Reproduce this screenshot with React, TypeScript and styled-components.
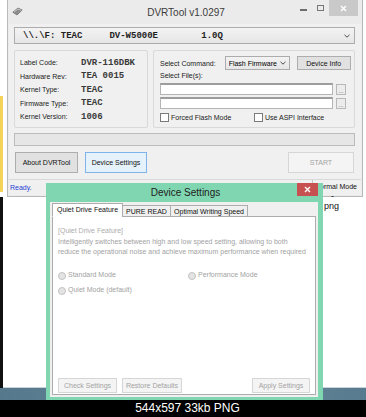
import React from 'react'
import styled, { createGlobalStyle } from 'styled-components'

const GlobalStyle = createGlobalStyle`
  html, body {
    margin: 0;
    padding: 0;
  }
  body {
    width: 366px;
    height: 417px;
    overflow: hidden;
    background: #fff;
    font-family: "Liberation Sans", Arial, sans-serif;
  }
`

function App() {
  return (
    <>
      <GlobalStyle />
      <Screen>
        <Desktop>
          <YellowEdge />
          <BlackEdge />
          <Taskbar />

          <MainWindow>
            <TitleBar>
              <TitleLeft>
                <svg width="11" height="9" viewBox="0 0 11 9">
                  <path d="M0.8 5.2 L6 1 L10.2 3 L5 8 Z" fill="#8c8c8c" stroke="#5c5c5c" strokeWidth="0.6" />
                  <path d="M2 5 L6 2 L9.2 3.4" stroke="#d4d4d4" fill="none" strokeWidth="0.8" />
                </svg>
              </TitleLeft>
              <TitleText>DVRTool v1.0297</TitleText>
              <Controls>
                <MinGlyph />
                <MaxGlyph />
                <CloseBox $active={false}>
                  <CloseIcon />
                </CloseBox>
              </Controls>
            </TitleBar>

            <Body>
              <DriveCombo>
                <span>{'\\\\.\\F: TEAC     DV-W5000E        1.0Q'}</span>
                <Chevron />
              </DriveCombo>

              <GroupRow>
                <GroupBox>
                  <InfoGrid>
                    <Label>Label Code:</Label>
                    <Value>DVR-116DBK</Value>
                    <Label>Hardware Rev:</Label>
                    <Value>TEA 0015</Value>
                    <Label>Kernel Type:</Label>
                    <Value>TEAC</Value>
                    <Label>Firmware Type:</Label>
                    <Value>TEAC</Value>
                    <Label>Kernel Version:</Label>
                    <Value>1006</Value>
                  </InfoGrid>
                </GroupBox>

                <GroupBox>
                  <CommandPane>
                    <CommandRow>
                      <Label>Select Command:</Label>
                      <SmallCombo>
                        <span>Flash Firmware</span>
                        <Chevron />
                      </SmallCombo>
                      <WinButton $w={54} $h={14}>Device Info</WinButton>
                    </CommandRow>
                    <FilesLabel>Select File(s):</FilesLabel>
                    <FileRow $top={1}>
                      <FileInput />
                      <DotsButton>...</DotsButton>
                    </FileRow>
                    <FileRow $top={2}>
                      <FileInput />
                      <DotsButton>...</DotsButton>
                    </FileRow>
                    <CheckRow>
                      <CheckItem $w={94}>
                        <CheckBox />
                        <Label>Forced Flash Mode</Label>
                      </CheckItem>
                      <CheckItem>
                        <CheckBox />
                        <Label>Use ASPI Interface</Label>
                      </CheckItem>
                    </CheckRow>
                  </CommandPane>
                </GroupBox>
              </GroupRow>

              <Progress />

              <ButtonRow>
                <WinButton $w={63}>About DVRTool</WinButton>
                <WinButton $w={62} $state="focused">Device Settings</WinButton>
                <Spacer />
                <WinButton $w={66} $state="disabled">START</WinButton>
              </ButtonRow>
            </Body>

            <StatusBar>
              <StatusText>Ready.</StatusText>
              <StatusPanel>Normal Mode</StatusPanel>
            </StatusBar>
          </MainWindow>

          <PageNote>
            <span>-</span>
            <span>png</span>
          </PageNote>

          <Dialog>
            <DialogTitleBar>
              <span />
              <DialogTitle>Device Settings</DialogTitle>
              <CloseBox $active>
                <CloseIcon />
              </CloseBox>
            </DialogTitleBar>

            <DialogClient>
              <TabStrip>
                <Tab $w={71} $selected>Quiet Drive Feature</Tab>
                <Tab $w={49}>PURE READ</Tab>
                <Tab $w={78}>Optimal Writing Speed</Tab>
              </TabStrip>
              <TabPanel>
                <Heading>[Quiet Drive Feature]</Heading>
                <Description>
                  Intelligently switches between high and low speed setting, allowing to both
                  <br />
                  reduce the operational noise and achieve maximum performance when required
                </Description>
                <RadioGrid>
                  <RadioItem>
                    <RadioDot />
                    <span>Standard Mode</span>
                  </RadioItem>
                  <RadioItem>
                    <RadioDot />
                    <span>Performance Mode</span>
                  </RadioItem>
                  <RadioItem>
                    <RadioDot />
                    <span>Quiet Mode (default)</span>
                  </RadioItem>
                </RadioGrid>
                <DialogButtons>
                  <WinButton $w={59} $h={15} $state="disabled">Check Settings</WinButton>
                  <WinButton $w={60} $h={15} $state="disabled">Restore Defaults</WinButton>
                  <Spacer />
                  <WinButton $w={58} $h={15} $state="disabled">Apply Settings</WinButton>
                </DialogButtons>
              </TabPanel>
            </DialogClient>
          </Dialog>
        </Desktop>

        <Caption>544x597 33kb PNG</Caption>
      </Screen>
    </>
  )
}

export default App

function Chevron() {
  return (
    <ChevronSvg width="6" height="4" viewBox="0 0 6 4">
      <path d="M0.5 0.8 L3 3.2 L5.5 0.8" stroke="#4a4a4a" strokeWidth="1" fill="none" />
    </ChevronSvg>
  )
}

function CloseIcon() {
  return (
    <svg width="7" height="7" viewBox="0 0 7 7">
      <path d="M1 1 L6 6 M6 1 L1 6" stroke="#fff" strokeWidth="1.4" />
    </svg>
  )
}

const Screen = styled.div`
  width: 366px;
  height: 417px;
  display: flex;
  flex-direction: column;
`

const Desktop = styled.div`
  position: relative;
  height: 400px;
  overflow: hidden;
  background: #fff;
  display: flex;
  flex-direction: column;
  justify-content: flex-end;
`

const YellowEdge = styled.div`
  position: absolute;
  left: 0;
  top: 96px;
  width: 3px;
  height: 96px;
  background: #f3d35a;
`

const BlackEdge = styled.div`
  position: absolute;
  left: 0;
  top: 197px;
  width: 3px;
  height: 191px;
  background: #111;
`

const PageNote = styled.div`
  position: absolute;
  left: 324px;
  top: 191px;
  display: flex;
  flex-direction: column;
  font-size: 9px;
  line-height: 10px;
  color: #111;

  span:first-child {
    padding-left: 7px;
  }
`

const Taskbar = styled.div`
  height: 12px;
  border-top: 1px solid #c9d4da;
  background: linear-gradient(90deg, #55788c, #6b8c9d 60%, #577a8e);
`

const Caption = styled.div`
  height: 17px;
  background: #000;
  color: #fff;
  font-size: 12px;
  line-height: 17px;
  text-align: center;
  padding-left: 9px;
`

/* main window */

const MainWindow = styled.div`
  position: absolute;
  left: 7px;
  top: 0;
  width: 356px;
  box-sizing: border-box;
  border: 1px solid #b9b9b9;
  border-top: none;
  padding: 0 1px 1px 1px;
  background: #ebebeb;
`

const TitleBar = styled.div`
  height: 24px;
  display: grid;
  grid-template-columns: 1fr auto 1fr;
  align-items: center;
`

const TitleLeft = styled.div`
  display: flex;
  align-items: center;
  padding-left: 3px;
  padding-bottom: 2px;
`

const TitleText = styled.div`
  font-size: 10px;
  color: #3c3c3c;
  padding-left: 2px;
`

const Controls = styled.div`
  justify-self: end;
  align-self: start;
  display: flex;
  align-items: center;
  height: 16px;
  margin-right: 3px;
`

const MinGlyph = styled.div`
  width: 7px;
  height: 2px;
  margin-top: 3px;
  background: #6d6d6d;
`

const MaxGlyph = styled.div`
  width: 7px;
  height: 6px;
  box-sizing: border-box;
  border: 1px solid #777;
  margin-left: 10px;
  margin-right: 5px;
`

const CloseBox = styled.div<{ $active: boolean }>`
  width: ${({ $active }) => ($active ? 21 : 29)}px;
  height: ${({ $active }) => ($active ? 13 : 16)}px;
  background: ${({ $active }) => ($active ? '#c75050' : '#c9c9c9')};
  display: flex;
  align-items: center;
  justify-content: center;
`

const Body = styled.div`
  background: #f0f0f0;
  padding: 3px 6px 6px 5px;
`

const DriveCombo = styled.div`
  height: 17px;
  box-sizing: border-box;
  border: 1px solid #acacac;
  background: linear-gradient(#f3f3f3, #e6e6e6);
  display: flex;
  align-items: center;
  padding: 0 4px 0 8px;
  font-family: "Liberation Mono", "Courier New", monospace;
  font-weight: bold;
  font-size: 9px;
  white-space: pre;
  color: #222;

  span {
    flex: 1;
  }
`

const ChevronSvg = styled.svg`
  flex: none;
`

const GroupRow = styled.div`
  margin-top: 6px;
  display: grid;
  grid-template-columns: 134px 202px;
  gap: 5px;
  height: 78px;
`

const GroupBox = styled.div`
  box-sizing: border-box;
  border: 1px solid #d9d9d9;
  border-radius: 2px;
`

const InfoGrid = styled.div`
  display: grid;
  grid-template-columns: 61px auto;
  grid-auto-rows: 13.5px;
  align-items: center;
  padding: 5px 0 0 5px;
`

const Label = styled.span`
  font-size: 7px;
  color: #1a1a1a;
  white-space: nowrap;
`

const Value = styled.span`
  font-family: "Liberation Mono", "Courier New", monospace;
  font-weight: bold;
  font-size: 9px;
  color: #3a3a3a;
`

const CommandPane = styled.div`
  padding: 5px 7px 0 6px;
  display: flex;
  flex-direction: column;
`

const CommandRow = styled.div`
  display: flex;
  align-items: center;
  height: 14px;
`

const SmallCombo = styled.div`
  width: 65px;
  height: 14px;
  flex: none;
  box-sizing: border-box;
  margin: 0 7px 0 9px;
  border: 1px solid #acacac;
  background: linear-gradient(#f3f3f3, #e6e6e6);
  display: flex;
  align-items: center;
  padding: 0 3px 0 3px;
  font-size: 7px;
  white-space: nowrap;

  span {
    flex: 1;
    overflow: hidden;
  }
`

const FilesLabel = styled(Label)`
  height: 12px;
  line-height: 12px;
`

const FileRow = styled.div<{ $top: number }>`
  margin-top: ${({ $top }) => $top}px;
  display: flex;
  align-items: flex-end;
  gap: 3px;
  height: 12px;
`

const FileInput = styled.div`
  width: 173px;
  height: 12px;
  box-sizing: border-box;
  border: 1px solid #b5b5b5;
  border-top: 2px solid #9c9c9c;
  background: #fff;
`

const DotsButton = styled.div`
  width: 10px;
  height: 11px;
  box-sizing: border-box;
  border: 1px solid #b8b8b8;
  background: #ececec;
  font-size: 6px;
  line-height: 12px;
  text-align: center;
  color: #555;
  overflow: hidden;
`

const CheckRow = styled.div`
  margin-top: 3px;
  display: flex;
  height: 10px;
  align-items: center;
`

const CheckItem = styled.div<{ $w?: number }>`
  display: flex;
  align-items: center;
  gap: 2px;
  width: ${({ $w }) => ($w ? `${$w}px` : 'auto')};
`

const CheckBox = styled.div`
  width: 9px;
  height: 9px;
  box-sizing: border-box;
  border: 1px solid #7a7a7a;
  background: #fff;
`

const Progress = styled.div`
  margin-top: 5px;
  height: 13px;
  box-sizing: border-box;
  border: 1px solid #bcbcbc;
  background: #e6e6e6;
`

const ButtonRow = styled.div`
  margin-top: 6px;
  padding: 0 1px;
  display: flex;
  gap: 7px;
`

const Spacer = styled.div`
  flex: 1;
`

const WinButton = styled.button<{
  $w: number
  $h?: number
  $state?: 'normal' | 'focused' | 'disabled'
}>`
  width: ${({ $w }) => $w}px;
  height: ${({ $h }) => $h ?? 21}px;
  flex: none;
  box-sizing: border-box;
  padding: 0;
  display: flex;
  align-items: center;
  justify-content: center;
  font-family: "Liberation Sans", Arial, sans-serif;
  font-size: 7px;
  white-space: nowrap;
  border: 1px solid
    ${({ $state }) =>
      $state === 'focused' ? '#7eb4ea' : $state === 'disabled' ? '#d6d6d6' : '#adadad'};
  background: ${({ $state }) =>
    $state === 'focused' ? '#e5f1fb' : $state === 'disabled' ? '#f4f4f4' : '#e1e1e1'};
  color: ${({ $state }) => ($state === 'disabled' ? '#a3a3a3' : '#111')};
`

const StatusBar = styled.div`
  height: 16px;
  box-sizing: border-box;
  border-top: 1px solid #d9d9d9;
  background: #f0f0f0;
  display: flex;
  align-items: center;
  font-size: 7px;
`

const StatusText = styled.div`
  flex: 1;
  padding-left: 1px;
  color: #1f3fd6;
`

const StatusPanel = styled.div`
  width: 49px;
  height: 15px;
  box-sizing: border-box;
  border-left: 1px solid #c4c4c4;
  padding-left: 2px;
  line-height: 14px;
  color: #111;
  white-space: nowrap;
`

/* device settings dialog */

const Dialog = styled.div`
  position: absolute;
  left: 46px;
  top: 183px;
  width: 277px;
  height: 219px;
  box-sizing: border-box;
  padding: 0 5px 5px 4px;
  background: #7fd6b1;
  display: flex;
  flex-direction: column;
`

const DialogTitleBar = styled.div`
  height: 19px;
  flex: none;
  display: grid;
  grid-template-columns: 1fr auto 1fr;

  & > :last-child {
    justify-self: end;
  }
`

const DialogTitle = styled.div`
  font-size: 10px;
  line-height: 20px;
  color: #222;
  padding-left: 3px;
`

const DialogClient = styled.div`
  flex: 1;
  background: #f0f0f0;
  padding: 1px 2px 2px 2px;
  display: flex;
  flex-direction: column;
  min-height: 0;
`

const TabStrip = styled.div`
  display: flex;
  align-items: flex-end;
  height: 14px;
  margin-bottom: -1px;
  position: relative;
  z-index: 1;
`

const Tab = styled.div<{ $w: number; $selected?: boolean }>`
  width: ${({ $w }) => $w}px;
  height: ${({ $selected }) => ($selected ? 14 : 12)}px;
  box-sizing: border-box;
  border: 1px solid #acacac;
  border-bottom-color: ${({ $selected }) => ($selected ? '#fff' : '#acacac')};
  margin-left: ${({ $selected }) => ($selected ? 0 : -1)}px;
  background: ${({ $selected }) => ($selected ? '#fff' : '#f0f0f0')};
  font-size: 7px;
  line-height: 11px;
  text-align: center;
  white-space: nowrap;
  color: #111;
`

const TabPanel = styled.div`
  flex: 1;
  background: #fff;
  border: 1px solid #acacac;
  padding: 9px 5px 1px 5px;
  display: flex;
  flex-direction: column;
  font-size: 7px;
  line-height: 10.5px;
  color: #a2a2a2;
`

const Heading = styled.div`
  color: #adadad;
`

const Description = styled.div`
  white-space: nowrap;
`

const RadioGrid = styled.div`
  margin-top: 13px;
  display: grid;
  grid-template-columns: 130px auto;
  grid-auto-rows: 10px;
  row-gap: 5px;
`

const RadioItem = styled.div`
  display: flex;
  align-items: center;
  gap: 2px;
  white-space: nowrap;
`

const RadioDot = styled.div`
  width: 8px;
  height: 8px;
  box-sizing: border-box;
  border: 1px solid #c2c2c2;
  border-radius: 50%;
  background: #e4e4e4;
`

const DialogButtons = styled.div`
  margin-top: auto;
  display: flex;
  gap: 5px;
`
